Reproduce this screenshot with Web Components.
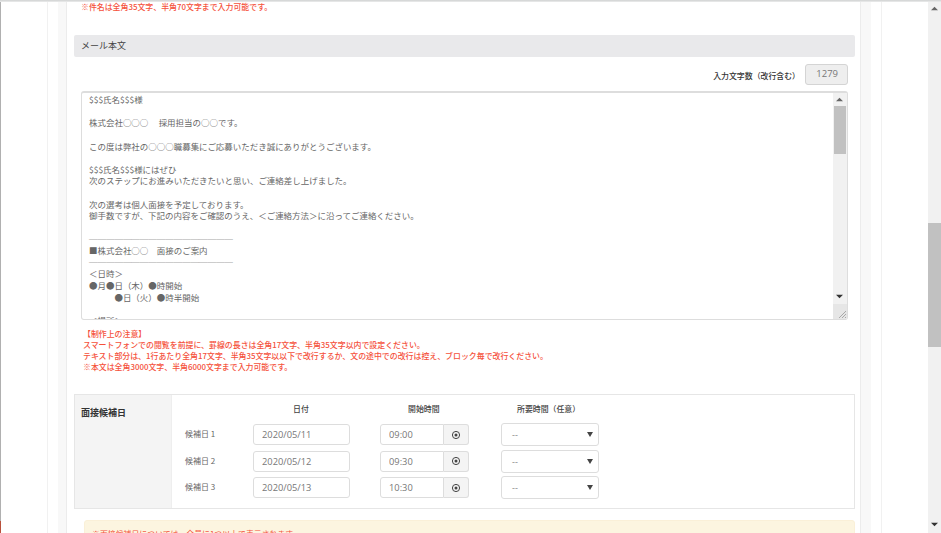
<!DOCTYPE html>
<html lang="ja">
<head>
<meta charset="utf-8">
<title>メール本文</title>
<style>
  html, body { margin: 0; height: 533px; overflow: hidden; background: #fff; }
  body { font-family: "Noto Sans CJK JP", "Liberation Sans", sans-serif; }
</style>
</head>
<body>
<app-shell>
  <red-note style="margin-left:7px;padding-top:1px">※件名は全角35文字、半角70文字まで入力可能です。</red-note>
  <section-band>メール本文</section-band>
  <char-count value="1279">入力文字数（改行含む）</char-count>
  <mail-body></mail-body>
  <red-note style="margin:8px 0 0 9px">【制作上の注意】<br>スマートフォンでの閲覧を前提に、罫線の長さは全角17文字、半角35文字以内で設定ください。<br>テキスト部分は、1行あたり全角17文字、半角35文字以以下で改行するか、文の途中での改行は控え、ブロック毎で改行ください。<br>※本文は全角3000文字、半角6000文字まで入力可能です。</red-note>
  <date-table></date-table>
  <warn-box>※面接候補日については、全員に1つ以上で表示されます。</warn-box>
</app-shell>

<script>
function define(name, css, html) {
  class El extends HTMLElement {
    constructor() {
      super();
      this.attachShadow({ mode: 'open' });
    }
    connectedCallback() {
      const body = typeof html === 'function' ? html(this) : html;
      this.shadowRoot.innerHTML = `<style>${css}</style>${body}`;
    }
  }
  customElements.define(name, El);
}

const arrow = (dir, h = 15) => {
  const m = h / 2;
  const d = dir === 'up' ? `M3 ${m + 1.7} 6.5 ${m - 1.7} 10 ${m + 1.7}Z` : `M3 ${m - 1.7} 10 ${m - 1.7} 6.5 ${m + 1.7}Z`;
  return `<svg width="13" height="${h}" viewBox="0 0 13 ${h}"><path d="${d}" fill="${dir === 'up' ? '#666' : '#333'}"/></svg>`;
};

define('app-shell', `
  :host { display: flex; height: 533px; overflow: hidden; position: relative; }
  .edge { width: 1px; background: linear-gradient(#b0b0b0 0 521px, #b9503c 521px); flex: none; }
  .left { width: 46px; flex: none; }
  .outer { flex: none; border: solid #f1f1f1; border-width: 0 1px; padding: 0 10px; box-sizing: border-box; width: 835px; }
  .inner { height: 100%; background: #f8f8f8; padding: 0 10px 0 8px; box-sizing: border-box; }
  .card { height: 100%; background: #fff; border: solid #ececec; border-width: 0 1px; box-sizing: border-box; padding: 0 5px 0 7px; overflow: hidden; }
  .space { flex: 1; }
  .bar { width: 13px; flex: none; background: #f1f1f1; display: flex; flex-direction: column; }
  .track { height: 205px; }
  .thumb { height: 124px; background: #c1c1c1; }
  .rest { flex: 1; }
  .bar svg { display: block; margin-bottom: 1px; }
  .top { position: absolute; left: 0; right: 0; top: 0; height: 2px; background: linear-gradient(#cfd1d1, #eceded); }
`, `
  <div class="edge"></div><div class="left"></div>
  <div class="outer"><div class="inner"><div class="card"><slot></slot></div></div></div>
  <div class="space"></div>
  <div class="bar">${arrow('up', 17)}<div class="track"></div><div class="thumb"></div><div class="rest"></div>${arrow('down')}</div>
  <div class="top"></div>
`);

define('red-note', `
  :host { display: block; color: #f5513b; font-size: 7.92px; line-height: 11px; font-weight: 500; white-space: nowrap; }
`, `<slot></slot>`);

define('section-band', `
  :host { display: block; margin-top: 23px; height: 22px; line-height: 21px; background: #e9e9eb; border-radius: 2px; padding-left: 7px; color: #444; font-size: 9px; }
`, `<slot></slot>`);

define('char-count', `
  :host { display: flex; justify-content: flex-end; align-items: center; gap: 5px; margin: 7px 7px 6px 0; height: 21px; font-size: 7.9px; font-weight: 500; color: #333; }
  .box { width: 43px; height: 21px; box-sizing: border-box; background: #eee; border: 1px solid #d4d4d4; border-radius: 3px; color: #777; font-size: 9.5px; line-height: 18px; text-align: right; padding-right: 9px; font-family: "Open Sans", sans-serif; font-weight: 400; }
  span { padding-top: 1px; }
`, (el) => `<span><slot></slot></span><div class="box">${el.getAttribute('value')}</div>`);

const rule = '<span class="rule">─────────────────</span>';
const mailText = `$$$氏名$$$様

株式会社○○○　 採用担当の○○です。

この度は弊社の○○○職募集にご応募いただき誠にありがとうございます。

$$$氏名$$$様にはぜひ
次のステップにお進みいただきたいと思い、ご連絡差し上げました。

次の選考は個人面接を予定しております。
御手数ですが、下記の内容をご確認のうえ、＜ご連絡方法＞に沿ってご連絡ください。

${rule}
■株式会社○○　面接のご案内
${rule}
＜日時＞
●月●日（木）●時開始
　　　●日（火）●時半開始

＜場所＞
`;

define('mail-body', `
  :host { display: flex; margin: 0 7px 0 7px; height: 229px; box-sizing: border-box; border: 1px solid #ddd; border-top-width: 2px; border-radius: 3px; background: #fff; overflow: hidden; }
  .text { flex: 1; min-width: 0; overflow: hidden; padding: 1px 0 0 7px; white-space: pre; font-size: 8.47px; line-height: 11.62px; color: #666; }
  .rule { color: #333; }
  .bar { width: 14px; flex: none; display: flex; flex-direction: column; background: #f1f1f1; }
  .thumb { height: 48px; margin: 0 1px; background: #c1c1c1; }
  .rest { flex: 1; }
  .grip { height: 15px; background: #e6e6e6; }
  .bar svg { display: block; }
`, `
  <div class="text">${mailText}</div>
  <div class="bar">
    ${arrow('up', 13)}<div class="thumb"></div><div class="rest"></div>${arrow('down')}
    <div class="grip"><svg width="14" height="15" viewBox="0 0 14 15"><path d="M6 14 13 7M9 14 13 10M12 14 13 13" stroke="#999" stroke-width=".8"/></svg></div>
  </div>
`);

define('date-row', `
  :host { display: contents; }
  .label { font-size: 8px; color: #666; justify-self: start; margin-top: -2px; }
  input { all: unset; box-sizing: border-box; width: 97px; height: 21px; border: 1px solid #ddd; border-radius: 3px; padding-left: 8px; font: 400 9.3px "Open Sans", sans-serif; color: #777; }
  .time { display: flex; justify-self: start; }
  .time input { width: 64px; border-radius: 3px 0 0 3px; }
  input.date { justify-self: start; }
  .addon { width: 25px; height: 21px; box-sizing: border-box; border: 1px solid #ddd; border-left: 0; border-radius: 0 3px 3px 0; background: #f4f4f4; display: flex; align-items: center; justify-content: center; }
  .sel { width: 98px; height: 23px; box-sizing: border-box; border: 1px solid #ddd; border-radius: 3px; padding-left: 10px; color: #888; font: 9px "Open Sans", sans-serif; display: flex; align-items: center; justify-content: space-between; justify-self: start; }
  .sel svg { margin-right: 5px; }
`, (el) => `
  <div class="label"><slot></slot></div>
  <input class="date" value="${el.getAttribute('date')}">
  <div class="time"><input value="${el.getAttribute('time')}">
    <div class="addon"><svg width="10" height="10" viewBox="0 0 10 10"><circle cx="5" cy="5" r="3.6" fill="none" stroke="#444" stroke-width="1"/><circle cx="5" cy="5" r="1.5" fill="#444"/></svg></div>
  </div>
  <div class="sel"><span>--</span><svg width="6" height="5" viewBox="0 0 6 5"><path d="M0 0H6L3 5Z" fill="#444"/></svg></div>
`);

define('date-table', `
  :host { display: flex; margin-top: 22px; height: 115px; box-sizing: border-box; border: 1px solid #e6e6e6; }
  .head { width: 97px; flex: none; background: #f4f4f4; border-right: 1px solid #eee; box-sizing: border-box; padding: 11px 0 0 6px; font-size: 9px; font-weight: 700; color: #333; }
  .grid { display: grid; grid-template-columns: 68px 127px 121px 98px; grid-template-rows: 21.5px 26.5px 26.5px 26.5px; align-items: center; padding: 5px 0 0 13px; }
  .th { font-size: 7.9px; font-weight: 500; color: #444; align-self: start; line-height: 18px; justify-self: start; }
`, `
  <div class="head">面接候補日</div>
  <div class="grid">
    <div></div><div class="th" style="margin-left:40px">日付</div><div class="th" style="margin-left:28px">開始時間</div><div class="th" style="margin-left:16px">所要時間（任意）</div>
    <date-row date="2020/05/11" time="09:00">候補日 1</date-row>
    <date-row date="2020/05/12" time="09:30">候補日 2</date-row>
    <date-row date="2020/05/13" time="10:30">候補日 3</date-row>
  </div>
`);

define('warn-box', `
  :host { display: block; margin: 11px 0 0 10px; height: 40px; background: #fcf5e0; border: 1px solid #faf0d8; border-radius: 3px; padding: 7px 0 0 7px; box-sizing: border-box; color: #f5513b; font-size: 7.9px; line-height: 11px; }
`, `<slot></slot>`);
</script>
</body>
</html>
